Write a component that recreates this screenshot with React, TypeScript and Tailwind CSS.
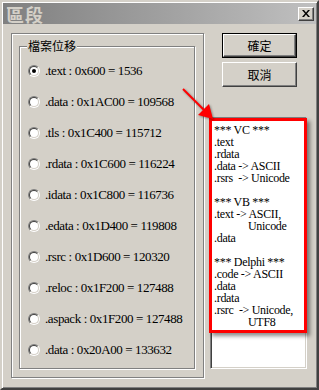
import React from 'react';

const SECTIONS: { name: string; offset: string; size: string }[] = [
  { name: '.text', offset: '0x600', size: '1536' },
  { name: '.data', offset: '0x1AC00', size: '109568' },
  { name: '.tls', offset: '0x1C400', size: '115712' },
  { name: '.rdata', offset: '0x1C600', size: '116224' },
  { name: '.idata', offset: '0x1C800', size: '116736' },
  { name: '.edata', offset: '0x1D400', size: '119808' },
  { name: '.rsrc', offset: '0x1D600', size: '120320' },
  { name: '.reloc', offset: '0x1F200', size: '127488' },
  { name: '.aspack', offset: '0x1F200', size: '127488' },
  { name: '.data', offset: '0x20A00', size: '133632' },
];

const NOTES: { text: string; indent?: boolean }[] = [
  { text: '*** VC ***' },
  { text: '.text' },
  { text: '.rdata' },
  { text: '.data -> ASCII' },
  { text: '.rsrs  -> Unicode' },
  { text: '' },
  { text: '*** VB ***' },
  { text: '.text -> ASCII,' },
  { text: 'Unicode', indent: true },
  { text: '.data' },
  { text: '' },
  { text: '*** Delphi ***' },
  { text: '.code -> ASCII' },
  { text: '.data' },
  { text: '.rdata' },
  { text: '.rsrc  -> Unicode,' },
  { text: 'UTF8', indent: true },
];

const serif = "font-['Liberation_Serif','Noto_Sans_CJK_TC',serif]";
const cjk = "font-['Noto_Sans_CJK_TC','Liberation_Sans',sans-serif]";

function Radio({ checked }: { checked?: boolean }) {
  return (
    <div className="w-[12px] h-[12px] rounded-full border border-t-[#808080] border-l-[#808080] border-r-white border-b-white shrink-0">
      <div className="w-full h-full rounded-full border border-t-[#404040] border-l-[#404040] border-r-[#d4d0c8] border-b-[#d4d0c8] bg-white flex items-center justify-center">
        {checked && <div className="w-[4px] h-[4px] rounded-full bg-black" />}
      </div>
    </div>
  );
}

function WinButton({ label, isDefault }: { label: string; isDefault?: boolean }) {
  const inner = (
    <div className="h-full w-full border border-t-white border-l-white border-r-[#404040] border-b-[#404040] shadow-[inset_-1px_-1px_0_#808080] flex items-center justify-center">
      <span className={`${cjk} text-[12px] text-black leading-none`}>{label}</span>
    </div>
  );
  return (
    <div className={`w-[75px] h-[25px] ${isDefault ? 'border border-black' : ''}`}>{inner}</div>
  );
}

export default function App() {
  return (
    <div className="relative w-[319px] h-[390px] bg-[#d4d0c8] border-2 border-t-[#d4d0c8] border-l-[#d4d0c8] border-r-[#404040] border-b-[#404040] shadow-[inset_1px_1px_0_#fff,inset_-1px_-1px_0_#808080] p-px overflow-hidden">
      {/* title bar */}
      <div className="h-[21px] bg-gradient-to-r from-[#808080] to-[#c0c0c0] flex items-center justify-between pl-[3px] pr-[2px]">
        <span className={`${cjk} text-[18px] font-bold tracking-[1px] text-[#d4d0c8] leading-none`}>區段</span>
        <div className="w-[16px] h-[14px] bg-[#d4d0c8] border border-t-white border-l-white border-r-[#404040] border-b-[#404040] shadow-[inset_-1px_-1px_0_#808080] flex items-center justify-center">
          <svg width="8" height="7" viewBox="0 0 8 7">
            <path d="M0 0h2l2 2.5L6 0h2L5 3.5 8 7H6L4 4.5 2 7H0l3-3.5z" fill="#000" />
          </svg>
        </div>
      </div>

      <div className="flex mt-[9px] ml-[8px]">
        {/* section group */}
        <div className="w-[193px] h-[345px] border border-[#808080] shadow-[inset_1px_1px_0_#fff,1px_1px_0_#fff] pt-[12px] pl-[7px] pr-[8px] pb-[8px] flex">
          <div className="relative flex-1 border border-[#808080] shadow-[inset_1px_1px_0_#fff,1px_1px_0_#fff] pt-[8px] pl-[8px]">
            <span className={`absolute left-[7px] top-[-9px] bg-[#d4d0c8] px-px ${cjk} text-[12px] leading-[16px] text-black`}>
              檔案位移
            </span>
            {SECTIONS.map((s, i) => (
              <div key={i} className="h-[31px] flex items-center gap-[5px]">
                <Radio checked={i === 0} />
                <span className={`${serif} text-[13px] tracking-[-0.4px] text-black whitespace-pre`}>
                  {`${s.name} : ${s.offset} = ${s.size}`}
                </span>
              </div>
            ))}
          </div>
        </div>

        {/* right column */}
        <div className="ml-[6px] flex flex-col">
          <div className="ml-[12px] flex flex-col gap-[4px]">
            <WinButton label="確定" isDefault />
            <WinButton label="取消" />
          </div>
          <div className="mt-[30px] w-[97px] h-[252px] bg-white border border-t-[#808080] border-l-[#808080] border-r-white border-b-white shadow-[inset_1px_1px_0_#404040,inset_-1px_-1px_0_#d4d0c8] pt-[6px] pl-[3px]">
            {NOTES.map((n, i) => (
              <div
                key={i}
                className={`${serif} text-[12px] leading-[12px] h-[12px] tracking-[-0.3px] text-black whitespace-pre ${n.indent ? 'pl-[34px]' : ''}`}
              >
                {n.text}
              </div>
            ))}
          </div>
        </div>
      </div>

      {/* annotation overlay */}
      <div className="absolute left-[207px] top-[116px] w-[98px] h-[215px] border-[3px] border-[#ff0000] shadow-[3px_3px_4px_rgba(0,0,0,0.45)]" />
      <svg className="absolute left-[176px] top-[82px]" width="40" height="40" viewBox="0 0 40 40">
        <g style={{ filter: 'drop-shadow(1px 1px 1px rgba(0,0,0,0.4))' }}>
          <line x1="5" y1="5" x2="26" y2="26" stroke="#ff0000" strokeWidth="2" />
          <polygon points="35,35 20,31 31,20" fill="#ff0000" />
        </g>
      </svg>
    </div>
  );
}
